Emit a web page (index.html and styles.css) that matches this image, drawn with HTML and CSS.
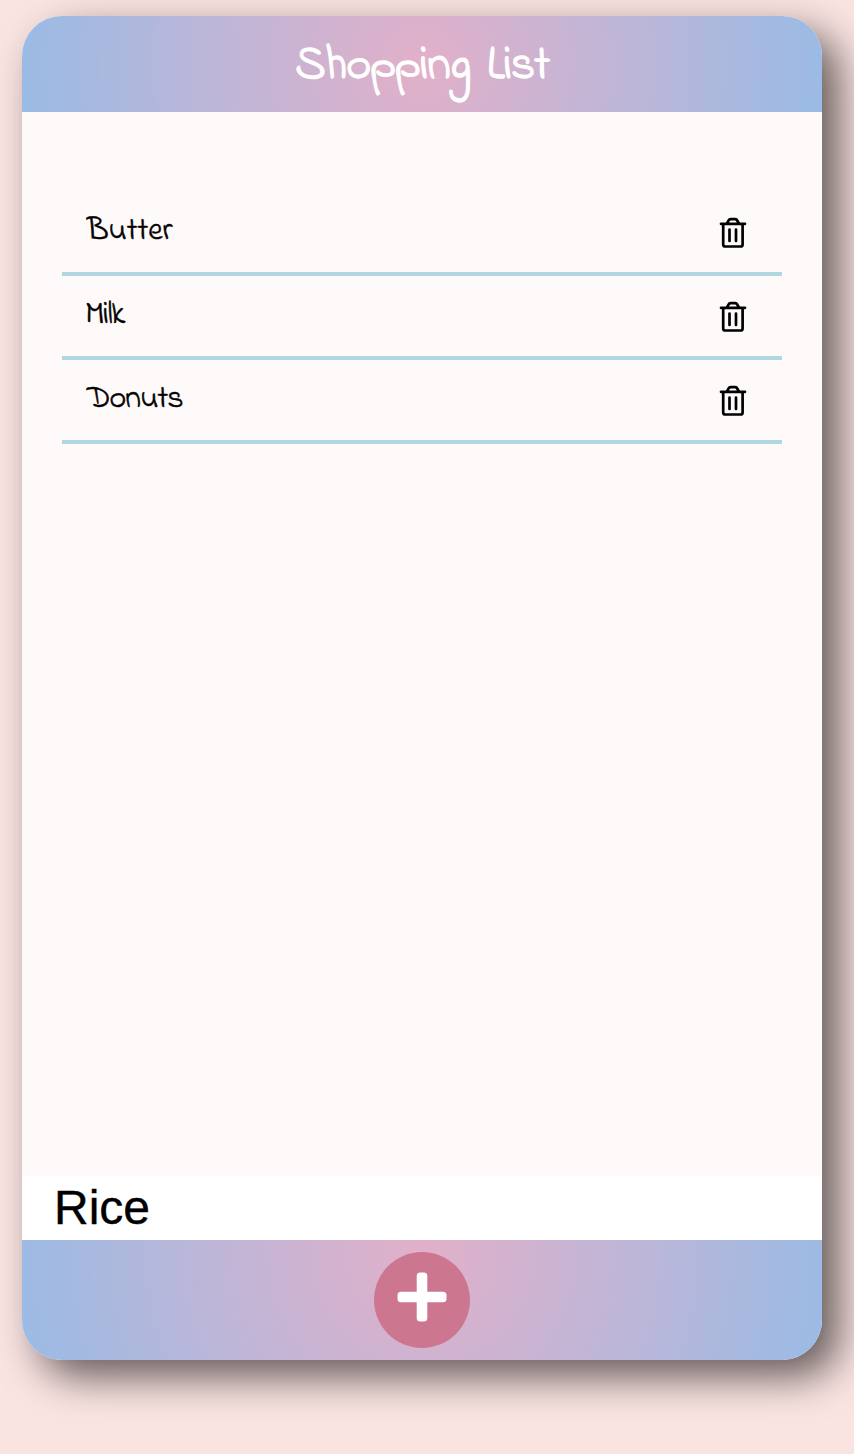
FILE: index.html
```html
<!DOCTYPE html>
<html lang="en">
<head>
<meta charset="utf-8">
<title>Shopping List</title>
<link rel="stylesheet" href="styles.css">
</head>
<body>
<svg class="sprite" aria-hidden="true">
  <symbol id="trash" viewBox="0 0 28 32">
    <path d="M4.200 7v20.500a2 2 0 0 0 2 2h15.400a2 2 0 0 0 2-2V7M2 6.800h24M8 6.500l1.600-3A2.200 2.200 0 0 1 11.600 2.200h4.600a2.200 2.200 0 0 1 2 1.300L20 6.500M10.500 12.500v11.500M17 12.500v11.500" fill="none" stroke="#000" stroke-width="2.700" stroke-linecap="round"/>
  </symbol>
</svg>
<main class="card">
  <header class="header"><h1 class="title">Shopping List</h1></header>
  <ul class="list">
    <li class="item"><span class="name">Butter</span><svg class="trash"><use href="#trash"/></svg></li>
    <li class="item"><span class="name milk">Milk</span><svg class="trash"><use href="#trash"/></svg></li>
    <li class="item"><span class="name donuts">Donuts</span><svg class="trash"><use href="#trash"/></svg></li>
  </ul>
  <input class="entry" type="text" value="Rice" aria-label="New item">
  <footer class="footer">
    <button class="add" aria-label="Add item">
      <svg class="plus" viewBox="0 0 50 50"><rect x="19.700" y="0.500" width="10.600" height="49" rx="3.500" fill="#fff"/><rect x="0.500" y="19.700" width="49" height="10.600" rx="3.500" fill="#fff"/></svg>
    </button>
  </footer>
</main>
</body>
</html>
```

FILE: styles.css
```css
* { box-sizing: border-box; }
body {
  margin: 0;
  padding: 16px 0 0 22px;
  min-height: 1454px;
  overflow: hidden;
  background: #fae4e2;
  font-family: "Indie Flower", Lato, sans-serif;
}
.sprite { display: none; }
.card {
  display: flex;
  flex-direction: column;
  width: 800px;
  height: 1344px;
  border-radius: 40px;
  background: #fffafa;
  box-shadow: 17px 17px 40px rgba(0, 0, 0, .6);
}
.header, .footer {
  display: flex;
  justify-content: center;
  background: radial-gradient(circle at 50% 50%, #e2b0c9 0%, #9abbe5 100%);
}
.header { height: 96px; border-radius: 40px 40px 0 0; }
.title {
  margin: 0;
  color: #fff;
  font-size: 48px;
  font-weight: 400;
  line-height: 100px;
  letter-spacing: -1.200px;
  word-spacing: 6px;
  -webkit-text-stroke: 1.300px #fff;
  white-space: nowrap;
}
.list {
  flex: 1;
  margin: 0;
  padding: 80px 40px 0;
  list-style: none;
}
.item {
  display: flex;
  justify-content: space-between;
  height: 84px;
  padding: 0 35px 0 25px;
  border-bottom: 4px solid #b2d6e2;
}
.name {
  font-size: 32px;
  line-height: 80px;
  -webkit-text-stroke: 0.500px #000;
}
.milk { margin-left: -2px; letter-spacing: -1.400px; }
.donuts { letter-spacing: -0.900px; }
.trash { width: 28px; height: 32px; margin-top: 25px; }
.entry {
  width: 100%;
  height: 64px;
  padding: 0 32px 2px;
  border: 0;
  outline: 0;
  background: #fff;
  color: #000;
  font: 48px "Liberation Sans", Arial, sans-serif;
  -webkit-text-stroke: 0.400px #000;
}
.footer {
  height: 120px;
  padding-top: 12px;
  border-radius: 0 0 40px 40px;
  background: radial-gradient(circle at 50% 10%, #e2b0c9 0%, #9abbe5 100%);
}
.add {
  display: flex;
  justify-content: center;
  width: 96px;
  height: 96px;
  padding: 20px 0 0;
  border: 0;
  border-radius: 50%;
  background: #cd7690;
}
.plus { width: 50px; height: 50px; }
```
